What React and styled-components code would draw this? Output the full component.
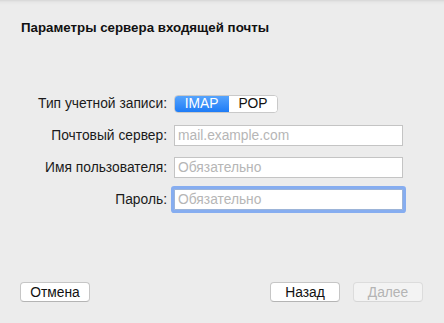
import React from 'react';
import styled, { createGlobalStyle } from 'styled-components';

const GlobalStyle = createGlobalStyle`
  html, body {
    margin: 0;
    padding: 0;
    background: #ececec;
  }
  body {
    font-family: "Liberation Sans", Arial, sans-serif;
    -webkit-font-smoothing: antialiased;
  }
`;

const Window = styled.div`
  width: 444px;
  height: 323px;
  display: flex;
  flex-direction: column;
  background: linear-gradient(to bottom, #d6d6d6 0px, #e6e6e6 2px, #ececec 5px);
  box-sizing: border-box;
`;

const Title = styled.h1`
  margin: 0;
  padding: 20px 0 0 21px;
  font-size: 13.3px;
  line-height: 16px;
  font-weight: bold;
  color: #111;
`;

const Form = styled.div`
  display: grid;
  grid-template-columns: 147px 229px;
  grid-auto-rows: 21px;
  column-gap: 7px;
  row-gap: 11px;
  align-items: center;
  margin: 57px 0 0 20px;
`;

const Label = styled.label`
  text-align: right;
  font-size: 13.8px;
  color: #1a1a1a;
  white-space: nowrap;
`;

const Segmented = styled.div`
  display: flex;
  width: 104px;
  height: 18px;
  border-radius: 4px;
  border: 1px solid #c9c9c9;
  box-sizing: border-box;
  background: #fff;
  overflow: hidden;
`;

const Segment = styled.div`
  flex: 0 0 ${p => p.$w}px;
  display: flex;
  align-items: center;
  justify-content: center;
  font-size: 13.8px;
  color: ${p => (p.$active ? '#fff' : '#111')};
  background: ${p => (p.$active ? 'linear-gradient(to bottom, #5aa6fd, #1b79f6)' : '#fff')};
  margin: ${p => (p.$active ? '-1px 0 -1px -1px' : '0')};
  border-radius: ${p => (p.$active ? '4px 0 0 4px' : '0')};
`;

const Input = styled.input`
  width: 229px;
  height: 21px;
  box-sizing: border-box;
  border: 1px solid ${p => (p.$focused ? '#9cb4d8' : '#c4c4c4')};
  background: #fff;
  padding: 0 3px;
  font-family: inherit;
  font-size: 13.8px;
  color: #111;
  outline: none;
  box-shadow: ${p => (p.$focused ? '0 0 0 3px #86adf0' : 'none')};
  border-radius: ${p => (p.$focused ? '1px' : '0')};

  &::placeholder {
    color: #b6b6b6;
  }
`;

const Spacer = styled.div`
  flex: 1;
`;

const Footer = styled.div`
  display: flex;
  align-items: center;
  padding: 0 21px 21px 20px;
  gap: 13px;
`;

const Button = styled.button`
  width: 70px;
  height: 20px;
  box-sizing: border-box;
  border-radius: 4px;
  border: 1px solid ${p => (p.disabled ? '#dcdcdc' : '#c6c6c6')};
  border-bottom-color: ${p => (p.disabled ? '#d6d6d6' : '#b4b4b4')};
  background: ${p => (p.disabled ? '#f3f3f3' : '#fff')};
  color: ${p => (p.disabled ? '#b4b4b4' : '#111')};
  font-family: inherit;
  font-size: 13.8px;
  padding: 0;
  margin-left: ${p => (p.$push ? 'auto' : '0')};
`;

const App = () => {
  return (
    <Window>
      <GlobalStyle />
      <Title>Параметры сервера входящей почты</Title>
      <Form>
        <Label>Тип учетной записи:</Label>
        <Segmented>
          <Segment $active $w={55}>IMAP</Segment>
          <Segment $w={48}>POP</Segment>
        </Segmented>
        <Label>Почтовый сервер:</Label>
        <Input placeholder="mail.example.com" />
        <Label>Имя пользователя:</Label>
        <Input placeholder="Обязательно" />
        <Label>Пароль:</Label>
        <Input placeholder="Обязательно" $focused />
      </Form>
      <Spacer />
      <Footer>
        <Button>Отмена</Button>
        <Button $push>Назад</Button>
        <Button disabled>Далее</Button>
      </Footer>
    </Window>
  );
};

export default App;
